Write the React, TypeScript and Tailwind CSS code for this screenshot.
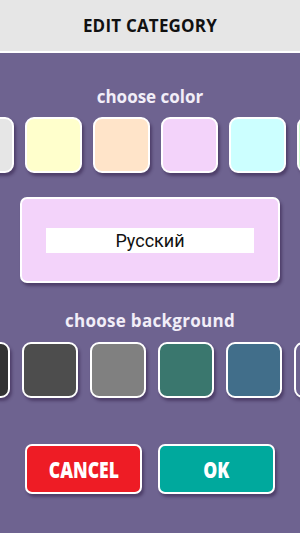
import React from "react";

const textColors = ["#e6e6e6", "#ffffcc", "#ffe4c9", "#f3d3fa", "#ccffff", "#ccffcc"];
const bgColors = ["#333333", "#4d4d4d", "#808080", "#3a776e", "#416e8a", "#6e6390"];

export default function App() {
  return (
    <div className="h-[533px] w-[300px] overflow-hidden bg-[#6e6390] flex flex-col" style={{ fontFamily: "'Open Sans', sans-serif" }}>
      {/* Header */}
      <div className="h-[53px] shrink-0 bg-[#e6e6e6] border-b-2 border-white flex items-center justify-center">
        <span className="text-[17px] font-bold text-[#111] tracking-[0.2px]">EDIT CATEGORY</span>
      </div>

      {/* Text colour picker */}
      <div className="mt-[33px] h-[22px] text-center text-[17px] leading-[22px] font-bold text-[#f2eef8]">choose color</div>
      <div className="mt-[9px] flex gap-[11px] ml-[-43px]">
        {textColors.map((c) => (
          <div
            key={c}
            className="w-[57px] h-[56px] shrink-0 rounded-[9px] border-2 border-white shadow-[2px_3px_3px_rgba(40,20,60,0.45)]"
            style={{ backgroundColor: c }}
          />
        ))}
      </div>

      {/* Preview */}
      <div className="mt-[24px] mx-[20px] w-[260px] h-[86px] rounded-[7px] border-2 border-white bg-[#f3d3fa] shadow-[2px_3px_3px_rgba(40,20,60,0.45)] flex items-center justify-center">
        <div className="w-[208px] h-[25px] bg-white flex items-center justify-center">
          <span className="text-[18px] text-[#111]" style={{ fontFamily: "Roboto, sans-serif" }}>Русский</span>
        </div>
      </div>

      {/* Background picker */}
      <div className="mt-[27px] h-[22px] text-center text-[17px] leading-[22px] font-bold text-[#f2eef8] tracking-[0.3px]">choose background</div>
      <div className="mt-[10px] flex gap-[12px] ml-[-46px]">
        {bgColors.map((c) => (
          <div
            key={c}
            className="w-[56px] h-[56px] shrink-0 rounded-[9px] border-2 border-white shadow-[2px_3px_3px_rgba(40,20,60,0.45)]"
            style={{ backgroundColor: c }}
          />
        ))}
      </div>

      {/* Actions */}
      <div className="mt-[46px] flex gap-[16px] pl-[25px]">
        <button className="w-[117px] h-[50px] rounded-[7px] border-2 border-white bg-[#ee1c25] shadow-[2px_3px_3px_rgba(40,20,60,0.45)] flex items-center justify-center">
          <span className="block text-white text-[22px] font-extrabold scale-x-[0.8]">CANCEL</span>
        </button>
        <button className="w-[117px] h-[50px] rounded-[7px] border-2 border-white bg-[#00a99d] shadow-[2px_3px_3px_rgba(40,20,60,0.45)] flex items-center justify-center">
          <span className="block text-white text-[22px] font-extrabold scale-x-[0.8]">OK</span>
        </button>
      </div>
    </div>
  );
}
